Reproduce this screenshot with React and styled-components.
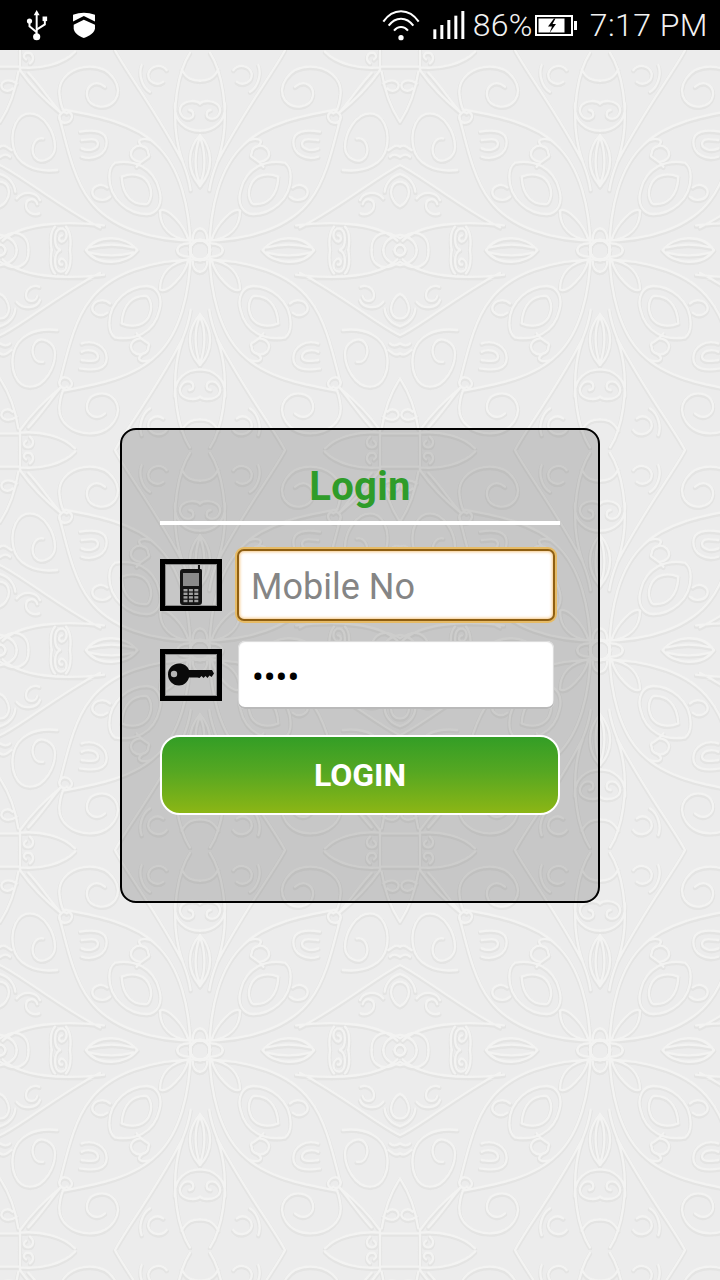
import React from "react";
import styled, { createGlobalStyle } from "styled-components";

const Global = createGlobalStyle`
  html, body { margin: 0; padding: 0; height: 100%; background: #ececec; }
  #root { height: 100%; }
  * { box-sizing: border-box; }
`;

const Screen = styled.div`
  position: relative;
  width: 720px;
  height: 1280px;
  overflow: hidden;
  display: flex;
  flex-direction: column;
  font-family: Roboto, "Liberation Sans", sans-serif;
  background: #ececec;
`;

const Wallpaper = styled.svg`
  position: absolute;
  left: 0;
  top: 50px;
  width: 720px;
  height: 1230px;
`;

const StatusBar = styled.header`
  position: relative;
  height: 50px;
  flex: none;
  background: #000;
  color: #f2f2f2;
  display: flex;
  align-items: center;
  justify-content: space-between;
  padding: 0 12px 0 26px;
`;

const StatusGroup = styled.div`
  display: flex;
  align-items: center;
  gap: ${(p) => p.$gap}px;
`;

const StatusGap = styled.span`
  width: ${(p) => p.$w}px;
`;

const StatusText = styled.span`
  font-size: 32px;
  line-height: 50px;
  font-weight: 300;
  margin: 0 ${(p) => p.$right || 0}px 0 ${(p) => p.$left || 0}px;
  letter-spacing: ${(p) => p.$track || 0}px;
`;

const Main = styled.main`
  position: relative;
  flex: 1;
  display: flex;
  align-items: center;
  justify-content: center;
`;

const Card = styled.section`
  width: 480px;
  height: 475px;
  border: 2px solid #000;
  border-radius: 16px;
  background: rgba(0, 0, 0, 0.155);
  padding: 29px 38px 0;
  display: flex;
  flex-direction: column;
`;

const Title = styled.h1`
  margin: 0;
  height: 61px;
  font-size: 40px;
  line-height: 56px;
  font-weight: 700;
  letter-spacing: 0.3px;
  color: #2f9c2a;
  text-align: center;
`;

const Rule = styled.div`
  height: 4px;
  background: #fff;
  margin: 1px 0 24px;
`;

const Row = styled.div`
  display: flex;
  align-items: center;
  height: ${(p) => p.$h}px;
  margin-bottom: ${(p) => p.$mb}px;
`;

const IconBox = styled.div`
  width: 62px;
  height: 52px;
  flex: none;
  border: 5px solid #000;
  box-shadow: inset 0 0 0 1px #8d8d8d;
  display: flex;
  align-items: center;
  justify-content: center;
  margin-right: ${(p) => p.$mr}px;
  & > svg { filter: blur(0.5px); }
`;

const TextInput = styled.input`
  display: block;
  width: ${(p) => p.$w}px;
  height: ${(p) => p.$h}px;
  border-radius: 7px;
  background: #fff;
  font-family: Roboto, "Liberation Sans", sans-serif;
  font-size: ${(p) => p.$size}px;
  color: #000;
  outline: none;
  padding: ${(p) => p.$top}px 0 0 ${(p) => p.$pad}px;
  border: ${(p) => (p.$focused ? "2px solid #8f5f12" : "0")};
  box-shadow: ${(p) =>
    p.$focused
      ? "0 0 0 2px #e6bb66, inset 0 0 3px 1px #f6c98a"
      : "inset 0 -2px 0 #b9b9b9, inset 0 0 1px 1px #d8d8d8"};
  &::placeholder { color: #858585; opacity: 1; }
`;

const LoginButton = styled.button`
  display: block;
  width: 400px;
  height: 80px;
  border: 2px solid #fff;
  border-radius: 20px;
  background: linear-gradient(180deg, #339e26 0%, #55a722 45%, #8cb615 100%);
  color: #fff;
  font-family: Roboto, "Liberation Sans", sans-serif;
  font-size: 32px;
  font-weight: 700;
  padding: 0;
`;

/* Quarter of the wallpaper ornament, in a 1200-unit tile scaled to 400px. */
const QUARTER = [
  "M60 60 C95 110 135 150 182 188 M85 68 C120 105 150 150 182 188",
  "M60 0 V60 M0 50 H60 M60 52 C120 58 190 42 225 5",
  "M55 65 C48 110 30 170 0 215",
  "M188 178 C280 195 400 215 470 285 C540 350 570 470 572 600",
  "M178 200 C200 285 222 390 270 450 C330 530 450 572 600 572",
  "M345 0 C385 75 465 175 548 335 C560 365 568 390 572 420",
  "M570 8 C530 70 518 180 530 262 C535 292 540 312 548 332",
  "M545 58 C560 88 580 92 600 92 M525 160 C520 215 560 242 600 242",
  "M600 255 C565 292 555 355 600 408 M600 260 C585 300 580 360 600 400",
  "M600 160 C590 150 560 150 545 165 C530 185 550 210 570 205 C585 200 582 180 568 180",
  "M315 110 C285 85 255 110 262 140 C270 172 320 182 345 150 C372 112 335 50 270 50 C215 50 175 85 178 130 C180 150 185 170 190 180",
  "M130 265 C100 260 90 300 105 322 C125 346 165 322 165 290 C165 250 135 190 90 190 C50 190 30 240 40 290 C50 340 100 368 172 360",
  "M365 380 C400 365 440 375 450 410 C460 440 445 460 440 462 C400 465 368 440 365 380",
  "M345 338 C400 328 462 350 478 420 C490 462 470 492 440 492 C390 492 328 450 328 380 C328 360 335 345 345 338",
  "M322 412 C300 395 272 412 278 432 C285 452 315 455 330 440",
  "M445 310 C445 288 415 280 400 295 C385 312 395 332 420 335",
  "M430 290 C400 270 430 262 450 270 M410 350 C430 320 455 325 445 310",
  "M112 462 C105 440 78 445 78 465 C78 485 100 498 118 490",
  "M50 445 C70 420 110 425 120 450",
  "M240 245 C282 238 320 242 320 276 C320 312 282 332 245 320 M245 270 C266 268 292 262 294 280 C294 298 265 305 245 295",
  "M480 482 C500 470 552 520 566 572 C510 562 480 530 480 482",
  "M600 535 C586 535 578 550 578 568 M532 600 C532 588 546 580 566 580",
  "M258 600 C292 550 380 556 412 600 M268 592 C310 582 360 582 400 592",
  "M8 572 C60 522 182 510 312 526",
  "M0 345 C60 372 182 472 300 532",
  "M85 600 C88 562 60 540 25 552 C18 555 8 560 0 565",
  "M155 600 C150 570 150 545 165 530 M210 600 C214 570 212 545 198 530",
  "M180 600 C160 590 160 540 182 535 C205 535 205 570 185 575 C172 570 178 555 186 556",
  "M50 100 C30 85 8 90 4 105 C5 122 25 128 38 115",
  "M90 40 C105 28 100 10 85 8 C70 8 68 22 78 28",
  "M0 395 C18 395 27 410 27 425 C27 445 12 465 0 468 M0 372 C25 378 44 400 46 425",
  "M200 190 C190 178 172 195 180 210 C190 225 212 218 216 200 C216 190 206 182 200 190",
  "M500 60 C485 40 452 45 445 70 C442 95 470 110 490 95 M425 45 C415 70 425 110 450 125",
  "M0 290 C15 280 25 295 35 300 M0 320 C15 310 25 315 30 320",
];

function Ornament() {
  const d = QUARTER.join(" ");
  const quad = (
    <>
      <path d={d} />
      <circle cx="600" cy="600" r="30" />
      <circle cx="0" cy="600" r="16" />
      <path d="M0 555 C35 560 50 580 50 600" />
    </>
  );
  const four = (
    <>
      <g>{quad}</g>
      <g transform="matrix(-1 0 0 1 1200 0)">{quad}</g>
      <g transform="matrix(1 0 0 -1 0 1200)">{quad}</g>
      <g transform="matrix(-1 0 0 -1 1200 1200)">{quad}</g>
    </>
  );
  return (
    <g transform="scale(0.3333333)" fill="none" strokeLinecap="round" strokeLinejoin="round">
      <g transform="translate(0 4)" stroke="#e2e2e1" strokeWidth="13" opacity="0.8">{four}</g>
      <g stroke="#f3f3f2" strokeWidth="7">{four}</g>
    </g>
  );
}

const Usb = () => (
  <svg width="22" height="32" viewBox="78 25 66 98">
    <path d="M110 28 L119 44 H113 V110 H107 V44 H101 Z" fill="#fff" />
    <circle cx="110" cy="110" r="11" fill="#fff" />
    <circle cx="88" cy="62" r="8" fill="#fff" />
    <rect x="128" y="48" width="14" height="14" fill="#fff" />
    <path d="M88 66 V78 L110 96 M135 60 V72 L110 88" fill="none" stroke="#fff" strokeWidth="6" />
  </svg>
);

const Shield = () => (
  <svg width="22" height="26" viewBox="220 36 65 77">
    <path d="M220 44 Q252 32 285 44 V64 L252 48 L220 64 Z" fill="#fff" />
    <path d="M222 74 L252 59 L285 74 V84 C285 96 268 108 252 113 C236 108 222 96 222 84 Z" fill="#fff" />
  </svg>
);

const Wifi = () => (
  <svg width="38" height="32" viewBox="68 28 114 96">
    <circle cx="125" cy="114" r="8" fill="#fff" />
    <path d="M72 66 C100 24 150 24 178 66 M88 78 C108 50 142 50 162 78 M104 93 C116 78 134 78 146 93" fill="none" stroke="#fff" strokeWidth="6" />
  </svg>
);

const Signal = () => (
  <svg width="32" height="28" viewBox="222 33 94 84">
    {[[222, 88], [243, 75], [264, 60], [285, 47], [306, 33]].map(([x, y]) => (
      <rect key={x} x={x} y={y} width="9" height={117 - y} fill="#fff" />
    ))}
  </svg>
);

const Battery = () => (
  <svg width="42" height="21" viewBox="0 0 42 21">
    <rect x="1" y="1" width="36" height="19" fill="none" stroke="#fff" strokeWidth="2" />
    <rect x="3.5" y="3.5" width="26" height="14" fill="#fff" />
    <rect x="39" y="6" width="3" height="9" fill="#fff" />
    <path d="M19 3.5 L13 11.5 H17 L14.5 18 L21 9 H17.5 L20.5 3.5 Z" fill="#000" />
  </svg>
);

const PhoneIcon = () => (
  <svg width="22" height="40" viewBox="0 0 22 40">
    <path d="M20 0 V4 H21 C21.6 4 22 5 22 6 V37 C22 39 21 40 19 40 H3 C1 40 0 39 0 37 V7 C0 5 1 4 3 4 H18 V0 Z" fill="#141414" />
    <rect x="3" y="8" width="16" height="13" fill="#8a8a8a" />
    {[0, 1, 2, 3].flatMap((r) =>
      [0, 1, 2].map((c) => (
        <rect key={`${r}-${c}`} x={3.5 + c * 5.4} y={24 + r * 3.6} width="4" height="2.4" fill="#a0a0a0" />
      ))
    )}
  </svg>
);

const KeyIcon = () => (
  <svg width="46" height="23" viewBox="0 0 46 23">
    <path d="M11 0.5 C16 0.5 19.5 3 21 7 H44 L46 10.5 L43.5 14 L41.5 12.5 L39.5 15 L37.5 13 L35.5 15 L33.5 13 L31.5 15 L29.5 14.5 H21 C19.5 19 16 22.5 11 22.5 C4.5 22.5 0 17.5 0 11.5 C0 5.5 4.5 0.5 11 0.5 Z" fill="#0a0a0a" />
    <circle cx="6" cy="11" r="3.2" fill="#b5b5b5" />
  </svg>
);

export default function App() {
  return (
    <Screen>
      <Global />
      <Wallpaper viewBox="0 0 720 1230" aria-hidden="true">
        <defs>
          <pattern id="tile" width="400" height="400" patternUnits="userSpaceOnUse">
            <Ornament />
          </pattern>
        </defs>
        <rect width="720" height="1230" fill="url(#tile)" />
      </Wallpaper>
      <StatusBar>
        <StatusGroup $gap={25}>
          <Usb />
          <Shield />
        </StatusGroup>
        <StatusGroup $gap={0}>
          <Wifi />
          <StatusGap $w={13} />
          <Signal />
          <StatusText $left={8} $right={2} $track={0.3}>86%</StatusText>
          <Battery />
          <StatusText $left={13} $track={0.45}>7:17 PM</StatusText>
        </StatusGroup>
      </StatusBar>
      <Main>
        <Card>
          <Title>Login</Title>
          <Rule />
          <Row $h={72} $mb={20}>
            <IconBox $mr={15}><PhoneIcon /></IconBox>
            <TextInput $focused $w={318} $h={72} $pad={12} $top={4} $size={36} placeholder="Mobile No" readOnly />
          </Row>
          <Row $h={68} $mb={26}>
            <IconBox $mr={16}><KeyIcon /></IconBox>
            <TextInput $w={316} $h={68} $pad={14} $top={5} $size={35} type="password" value="1234" readOnly />
          </Row>
          <LoginButton type="button">LOGIN</LoginButton>
        </Card>
      </Main>
    </Screen>
  );
}
